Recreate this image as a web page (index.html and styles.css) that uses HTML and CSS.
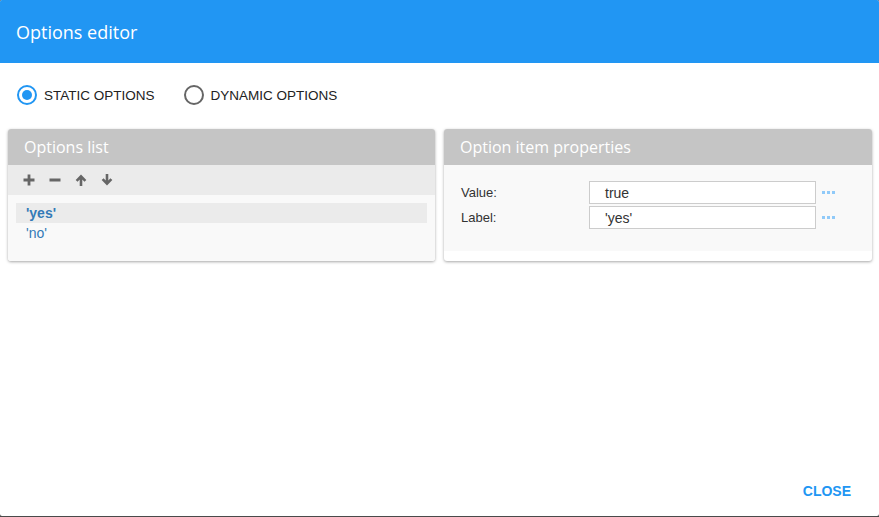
FILE: index.html
```html
<!DOCTYPE html>
<html>
<head>
<meta charset="utf-8">
<link rel="stylesheet" href="styles.css">
</head>
<body>
<div class="dialog">
  <div class="dlg-header">Options editor</div>
  <div class="dlg-content">
    <div class="radios">
      <label class="radio checked"><span class="circle"></span><span class="rlabel">STATIC OPTIONS</span></label>
      <label class="radio"><span class="circle"></span><span class="rlabel">DYNAMIC OPTIONS</span></label>
    </div>
    <div class="panels">
      <div class="panel">
        <div class="panel-head">Options list</div>
        <div class="toolbar">
          <svg class="tb-icon" width="12" height="12" viewBox="0 0 12 12"><path d="M6 0.5v11M0.5 6h11" stroke="#666" stroke-width="2.8"/></svg>
          <svg class="tb-icon" width="12" height="12" viewBox="0 0 12 12"><path d="M0.5 6h11" stroke="#666" stroke-width="2.8"/></svg>
          <svg class="tb-icon" width="12" height="12" viewBox="0 0 12 12"><path d="M6 12V3M1.6 6.8L6 2.3l4.4 4.5" stroke="#666" stroke-width="2.6" fill="none"/></svg>
          <svg class="tb-icon" width="12" height="12" viewBox="0 0 12 12"><path d="M6 0V9M1.6 5.2L6 9.7l4.4-4.5" stroke="#666" stroke-width="2.6" fill="none"/></svg>
        </div>
        <div class="list">
          <div class="item selected">'yes'</div>
          <div class="item">'no'</div>
        </div>
      </div>
      <div class="panel">
        <div class="panel-head">Option item properties</div>
        <div class="props">
          <div class="prop-row">
            <span class="prop-label">Value:</span>
            <span class="prop-input">true</span>
            <svg class="dots" width="13" height="3" viewBox="0 0 13 3"><rect x="0" y="0" width="3" height="3" fill="#90caf9"/><rect x="5" y="0" width="3" height="3" fill="#90caf9"/><rect x="10" y="0" width="3" height="3" fill="#90caf9"/></svg>
          </div>
          <div class="prop-row">
            <span class="prop-label">Label:</span>
            <span class="prop-input">'yes'</span>
            <svg class="dots" width="13" height="3" viewBox="0 0 13 3"><rect x="0" y="0" width="3" height="3" fill="#90caf9"/><rect x="5" y="0" width="3" height="3" fill="#90caf9"/><rect x="10" y="0" width="3" height="3" fill="#90caf9"/></svg>
          </div>
        </div>
      </div>
    </div>
  </div>
  <div class="dlg-footer"><span class="btn">CLOSE</span></div>
</div>
</body>
</html>
```
FILE: styles.css
```css
html, body {
  margin: 0;
  padding: 0;
  background: #4a4a4a;
}
body {
  width: 879px;
  height: 517px;
  overflow: hidden;
}
.dialog {
  width: 879px;
  height: 516px;
  background: #fff;
  border-radius: 2px;
  display: flex;
  flex-direction: column;
  overflow: hidden;
}
.dlg-header {
  height: 63px;
  background: #2196f3;
  color: #fff;
  font-family: "Open Sans", sans-serif;
  font-size: 18px;
  line-height: 64px;
  padding-left: 16px;
  flex: none;
}
.dlg-content {
  flex: 1;
}
.radios {
  display: flex;
  height: 64px;
  margin-bottom: 2px;
  align-items: center;
  padding-left: 17px;
  font-family: "Liberation Sans", Arial, sans-serif;
  font-size: 13.5px;
  color: #222;
}
.radio {
  display: flex;
  align-items: center;
  margin-right: 29px;
}
.circle {
  width: 16px;
  height: 16px;
  border: 2px solid #666;
  border-radius: 50%;
  margin-right: 7px;
  box-sizing: content-box;
  position: relative;
}
.radio.checked .circle {
  border-color: #2196f3;
}
.radio.checked .circle::after {
  content: "";
  position: absolute;
  left: 3px;
  top: 3px;
  width: 10px;
  height: 10px;
  border-radius: 50%;
  background: #2196f3;
}
.panels {
  display: grid;
  grid-template-columns: 427px 428px;
  column-gap: 9px;
  padding-left: 8px;
}
.panel {
  background: #fff;
  border-radius: 3px;
  box-shadow: 0 1px 3px rgba(0,0,0,0.35);
  overflow: hidden;
  height: 132px;
  display: flex;
  flex-direction: column;
}
.panel-head {
  height: 36px;
  line-height: 36px;
  background: #c5c5c5;
  color: #fff;
  font-family: "Open Sans", sans-serif;
  font-size: 16px;
  padding-left: 16px;
  flex: none;
}
.toolbar {
  height: 30px;
  background: #ebebeb;
  display: flex;
  align-items: center;
  padding-left: 15px;
  gap: 14px;
}
.tb-icon {
  display: block;
}
.list {
  flex: 1;
  background: #f9f9f9;
  padding: 8px;
  font-family: "Liberation Sans", Arial, sans-serif;
  font-size: 14px;
  color: #337ab7;
}
.item {
  height: 20px;
  line-height: 21px;
  padding-left: 10px;
}
.item.selected {
  background: #ebebeb;
  font-weight: bold;
}
.props {
  background: #f9f9f9;
  padding: 16px 0 22px 17px;
  font-family: "Liberation Sans", Arial, sans-serif;
}
.prop-row {
  display: flex;
  align-items: center;
  height: 23px;
  margin-bottom: 2px;
}
.prop-row:last-child {
  margin-bottom: 0;
}
.prop-label {
  width: 128px;
  font-size: 13px;
  line-height: 24px;
  color: #333;
}
.prop-input {
  height: 21px;
  line-height: 23px;
  border: 1px solid #ccc;
  background: #fff;
  padding-left: 15px;
  box-sizing: content-box;
  width: 210px;
  font-size: 14px;
  color: #333;
}
.dots {
  display: block;
  margin-left: 6px;
}
.dlg-footer {
  height: 52px;
  display: flex;
  justify-content: flex-end;
  align-items: center;
  padding-right: 28px;
}
.btn {
  font-family: "Liberation Sans", Arial, sans-serif;
  font-size: 14px;
  font-weight: bold;
  color: #2196f3;
  margin-top: 1px;
}
```
